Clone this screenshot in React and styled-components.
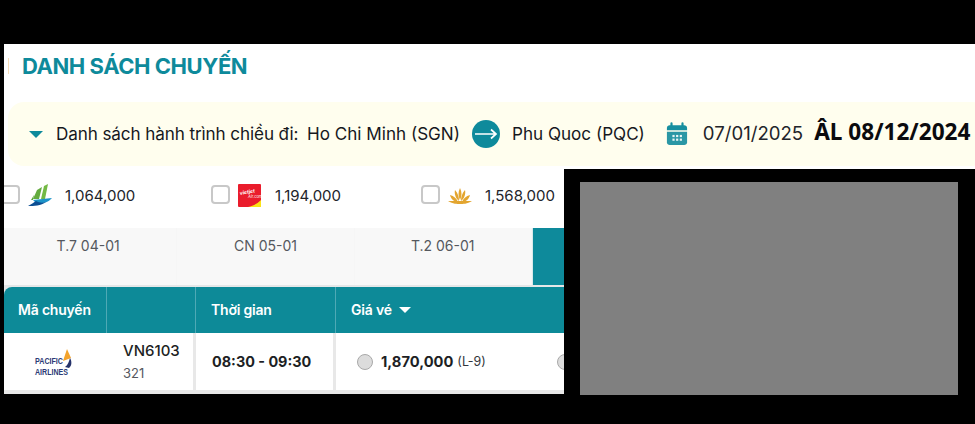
import React from "react";
import styled, { createGlobalStyle } from "styled-components";

const Global = createGlobalStyle`
  html, body { margin: 0; padding: 0; background: #000; }
  body { font-family: Inter, "Noto Sans", sans-serif; width: 975px; height: 424px; overflow: hidden; }
`;
const Page = styled.div`
  width: 975px; height: 424px; padding: 44px 0 0 4px; box-sizing: border-box; background: #000;
  display: flex; flex-direction: column;
`;
const TopPanel = styled.section`
  width: 971px; height: 125px; background: #fff; box-sizing: border-box; padding-left: 4px; overflow: hidden;
  flex: none;
`;
const TitleRow = styled.div`
  height: 58px; display: flex; align-items: center; box-sizing: border-box; padding-bottom: 14px;
`;
const TitleMark = styled.span`
  width: 1px; height: 16px; background: #f6dcb8; margin-right: 13px;
`;
const Title = styled.h1`
  margin: 0; font-size: 22px; line-height: 28px; font-weight: 700; color: #0e8a9b; letter-spacing: -0.45px; white-space: nowrap;
`;
const Banner = styled.div`
  height: 64px; width: 980px; background: #fffeee; border-radius: 16px; display: flex; align-items: center;
  padding: 0 0 2px 21px; box-sizing: border-box; color: #16181d; font-size: 17.1px; white-space: nowrap;
`;
const Caret = styled.span`
  width: 0; height: 0; border-left: ${p => p.$size}px solid transparent; border-right: ${p => p.$size}px solid transparent;
  border-top: ${p => p.$size}px solid ${p => p.$color}; flex: none; margin: ${p => p.$margin};
`;
const BannerLabel = styled.span`
  margin-left: 13px; width: 251px; flex: none; letter-spacing: -0.1px;
`;
const Place = styled.span` flex: none; `;
const Arrow = styled.span`
  width: 28px; height: 28px; border-radius: 50%; background: #0e8a9b; margin: 2px 12px 0; flex: none;
  display: flex; align-items: center; justify-content: center;
`;
const CalendarSlot = styled.span` margin: 2px 0 0 21px; width: 22px; height: 24px; flex: none; display: block; `;
const DateText = styled.span`
  margin-left: 15px; font-size: 18.6px; color: #22242a;
`;
const Lunar = styled.span`
  margin: -2px 0 0 11px; font: 700 22.6px/1 "Noto Sans", "Open Sans", sans-serif; color: #0b0b0e;
`;

const Bottom = styled.div` display: flex; flex: none; `;
const LeftPanel = styled.section`
  width: 560px; height: 225px; background: #fff; overflow: hidden; flex: none; position: relative;
`;
const Filters = styled.div`
  height: 59px; display: flex; align-items: center; margin-left: -3px; padding-bottom: 6px; box-sizing: border-box;
`;
const Filter = styled.label`
  width: 210px; flex: none; display: flex; align-items: center; color: #22242a; font-size: 15px;
`;
const Check = styled.span`
  width: 15px; height: 15px; border: 2px solid #c8c8c8; border-radius: 4px; flex: none; background: #fff; margin-top: -2px;
`;
const LogoSlot = styled.span`
  width: 24px; height: 24px; margin-left: 8px; margin-right: 13px; flex: none; display: block;
`;
const Tabs = styled.div`
  height: 57px; display: grid; grid-template-columns: repeat(4, 177.3px); margin-left: -4px; background: #f8f8f8;
`;
const Tab = styled.div`
  background: ${p => p.$active ? "#0e8a9b" : "#f8f8f8"};
  color: #55585e; font-size: 14px; text-align: center; line-height: 35px;
  border-right: 1px solid #f6f6f6; box-sizing: border-box;
  ${p => p.$active && "border-left: 1px solid #d9e9eb;"}
`;
const Table = styled.div` border-top: 2px solid #e5e7e8; background: #e8e8e8; height: 109px; `;
const Head = styled.div`
  height: 46px; background: #0d8a98; border-radius: 8px 0 0 0; display: grid;
  grid-template-columns: 103px 89px 140px 1fr;
`;
const HeadCell = styled.div`
  color: #fff; font-size: 14px; font-weight: 600; display: flex; align-items: center; letter-spacing: -0.2px;
  padding: 0 0 2px ${p => p.$pad}px; box-sizing: border-box; border-right: 1px solid #4ea9b5; white-space: nowrap;
  &:last-child { border-right: 0; }
`;
const Row = styled.div`
  height: 57px; display: grid; grid-template-columns: 189px 137px 1fr; column-gap: 3px;
`;
const Cell = styled.div` background: #fff; display: flex; align-items: center; `;
const FlightCell = styled(Cell)` padding-left: 31px; box-sizing: border-box; `;
const PacificSlot = styled.span` width: 37px; height: 28px; display: block; flex: none; margin-right: 55px; margin-top: 2px; overflow: visible; `;
const FlightInfo = styled.div` display: flex; flex-direction: column; margin-left: -4px; `;
const Code = styled.span` font-size: 15px; line-height: 18px; font-weight: 500; color: #1d1f24; margin-top: 1px; `;
const Plane = styled.span` font-size: 13px; line-height: 18px; color: #55585e; margin-top: 4px; `;
const TimeCell = styled(Cell)`
  font-size: 14.4px; font-weight: 700; color: #1d1f24; padding-left: 16px; white-space: nowrap;
`;
const PriceCell = styled(Cell)` padding-left: 21px; overflow: hidden; white-space: nowrap; `;
const Radio = styled.span`
  width: 14px; height: 14px; border-radius: 50%; background: #dcdcdc; border: 1px solid #a9a9a9; flex: none;
`;
const Price = styled.b` font-size: 14.7px; font-weight: 700; color: #1d1f24; margin-left: 8px; `;
const Fare = styled.span` font-size: 12.4px; color: #33363b; margin-left: 4px; `;
const NextRadio = styled(Radio)` margin-left: 71px; `;

const RightPanel = styled.div` padding: 13px 0 0 16px; flex: none; `;
const Video = styled.div` width: 378px; height: 213px; background: #808080; `;

const BambooLogo = () => (
  <LogoSlot as="svg" viewBox="0 0 24 24">
    <path d="M9 6 L14 3 L11 15 L5 15Z" fill="#63ab3e" />
    <path d="M16 2 L20 0 L17 15 L13 15Z" fill="#74b944" />
    <path d="M3 16 L6 11 L5 16Z" fill="#5aa53a" />
    <path d="M5 16 L24 14 C20 19 12 20 8 19Z" fill="#1c93c9" />
    <path d="M0 22 C4 20 6 18 8 17 C12 19 14 19 18 18 C13 22 6 22 0 22Z" fill="#0c4e93" />
  </LogoSlot>
);
const VietjetLogo = () => (
  <LogoSlot as="svg" viewBox="0 0 24 24">
    <rect width="23" height="23" rx="1" fill="#ea1c2c" />
    <path d="M10 23 L23 23 L23 16 C19 20 15 22 10 23Z" fill="#fbe416" />
    <text x="2" y="11" fontSize="5" fontWeight="700" fill="#fff" fontStyle="italic" transform="rotate(-10 2 11)">vietjet</text>
    <text x="10" y="14" fontSize="4" fill="#fff" fontStyle="italic">Air.com</text>
  </LogoSlot>
);
const LotusLogo = () => (
  <LogoSlot as="svg" viewBox="0 0 24 24">
    <g fill="#e3a52f">
      <path d="M12 4 C14 8 14 12 12 16 C10 12 10 8 12 4Z" />
      <path d="M7 6 C10 9 11 13 11 17 C8 15 6 10 7 6Z" />
      <path d="M17 6 C14 9 13 13 13 17 C16 15 18 10 17 6Z" />
      <path d="M2 11 C6 12 9 15 10 18 C6 18 3 15 2 11Z" />
      <path d="M22 11 C18 12 15 15 14 18 C18 18 21 15 22 11Z" />
      <path d="M0 17 C6 17 18 17 24 17 C19 20 15 20 12 20 C9 20 5 20 0 17Z" />
    </g>
  </LogoSlot>
);

export default function App() {
  return (
    <>
      <Global />
      <Page>
        <TopPanel>
          <TitleRow>
            <TitleMark />
            <Title>DANH SÁCH CHUYẾN</Title>
          </TitleRow>
          <Banner>
            <Caret $size={7} $color="#0e8a9b" $margin="3px 0 0 0" />
            <BannerLabel>Danh sách hành trình chiều đi:</BannerLabel>
            <Place>Ho Chi Minh (SGN)</Place>
            <Arrow>
              <svg width="24" height="14" viewBox="0 0 24 14" fill="none" stroke="#fff" strokeWidth="1.7">
                <path d="M1 7H22M17 2.5L22 7L17 11.5" />
              </svg>
            </Arrow>
            <Place>Phu Quoc (PQC)</Place>
            <CalendarSlot as="svg" viewBox="0 0 24 26">
              <path d="M6 1.5V5M18 1.5V5" stroke="#178f9f" strokeWidth="2.4" strokeLinecap="round" />
              <path d="M1 9V6.5C1 4.5 2.5 3.5 4 3.5H20C21.5 3.5 23 4.5 23 6.5V9Z" fill="#178f9f" />
              <path d="M1 10.5H23V22C23 24 21.5 25 20 25H4C2.5 25 1 24 1 22Z" fill="#2a97a5" />
              <g fill="#e8f5f4">
                <rect x="7" y="14" width="2.4" height="2.4" /><rect x="11" y="14" width="2.4" height="2.4" /><rect x="15" y="14" width="2.4" height="2.4" />
                <rect x="7" y="18" width="2.4" height="2.4" /><rect x="11" y="18" width="2.4" height="2.4" /><rect x="15" y="18" width="2.4" height="2.4" />
              </g>
            </CalendarSlot>
            <DateText>07/01/2025</DateText>
            <Lunar>ÂL 08/12/2024</Lunar>
          </Banner>
        </TopPanel>
        <Bottom>
          <LeftPanel>
            <Filters>
              <Filter><Check /><BambooLogo />1,064,000</Filter>
              <Filter><Check /><VietjetLogo />1,194,000</Filter>
              <Filter><Check /><LotusLogo />1,568,000</Filter>
            </Filters>
            <Tabs>
              <Tab>T.7 04-01</Tab>
              <Tab>CN 05-01</Tab>
              <Tab>T.2 06-01</Tab>
              <Tab $active />
            </Tabs>
            <Table>
              <Head>
                <HeadCell $pad={14}>Mã chuyến</HeadCell>
                <HeadCell />
                <HeadCell $pad={15}>Thời gian</HeadCell>
                <HeadCell $pad={15}>Giá vé<Caret $size={6} $color="#fff" $margin="1px 0 0 7px" /></HeadCell>
              </Head>
              <Row>
                <FlightCell>
                  <PacificSlot as="svg" viewBox="0 0 37 28">
                    <path d="M32 0L36 9L28 12Z" fill="#f3a32c" />
                    <path d="M35 9C37 12 37 17 34 19L30 18C33 16 34 12 35 9Z" fill="#26336b" />
                    <text x="0" y="14.5" fontSize="9.5" fontWeight="700" fill="#2b3a75" fontFamily="Liberation Sans" textLength="28" lengthAdjust="spacingAndGlyphs">PACIFIC</text>
                    <text x="0" y="26" fontSize="9.5" fontWeight="700" fill="#2b3a75" fontFamily="Liberation Sans" textLength="33" lengthAdjust="spacingAndGlyphs">AIRLINES</text>
                  </PacificSlot>
                  <FlightInfo>
                    <Code>VN6103</Code>
                    <Plane>321</Plane>
                  </FlightInfo>
                </FlightCell>
                <TimeCell>08:30 - 09:30</TimeCell>
                <PriceCell>
                  <Radio />
                  <Price>1,870,000</Price>
                  <Fare>(L-9)</Fare>
                  <NextRadio />
                </PriceCell>
              </Row>
            </Table>
          </LeftPanel>
          <RightPanel><Video /></RightPanel>
        </Bottom>
      </Page>
    </>
  );
}
